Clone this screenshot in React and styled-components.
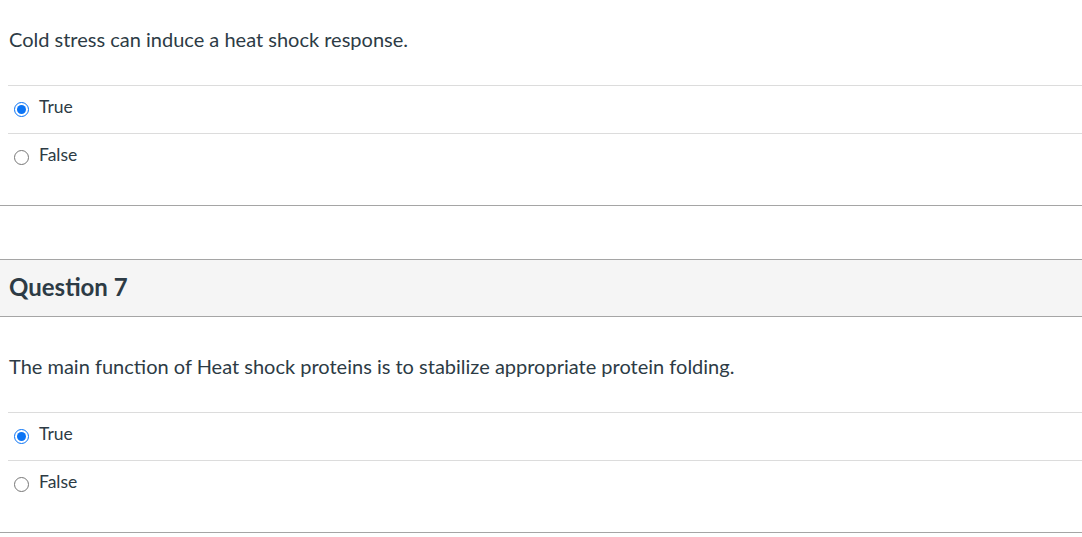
import styled, { createGlobalStyle } from 'styled-components'

const GlobalStyle = createGlobalStyle`
  body {
    margin: 0;
    background: #fff;
    font-family: Lato, "Liberation Sans", sans-serif;
    color: #2d3b45;
  }
`

const Page = styled.div`
  width: 1082px;
  padding-top: 26px;
`

const Question = styled.section`
  border-bottom: 1px solid #a5a5a5;
  padding-bottom: 24px;
  margin-bottom: ${p => (p.$last ? '0' : '53px')};
`

const Header = styled.div`
  display: flex;
  align-items: center;
  height: 56px;
  padding: 0 9px;
  background: #f5f5f5;
  border-top: 1px solid #a5a5a5;
  border-bottom: 1px solid #a5a5a5;
  margin-bottom: 36px;
`

const Title = styled.h2`
  margin: 0;
  font-size: 24px;
  font-weight: 700;
  line-height: 1.2;
  position: relative;
  top: -1px;
`

const Text = styled.p`
  margin: 0 0 32px;
  padding: 0 9px;
  font-size: 20px;
  line-height: 27px;
`

const Answers = styled.div`
  margin-left: 8px;
`

const Answer = styled.label`
  display: flex;
  align-items: center;
  gap: 10px;
  padding: 9px 0 14px 6px;
  border-top: 1px solid #dcdcdc;
  font-size: 17.5px;
  line-height: 24px;
`

const Radio = styled.input`
  width: 15px;
  height: 15px;
  margin: 5px 0 0 0;
  accent-color: #0b74f5;
`

const questions = [
  { title: null, text: 'Cold stress can induce a heat shock response.', answer: 'True' },
  { title: 'Question 7', text: 'The main function of Heat shock proteins is to stabilize appropriate protein folding.', answer: 'True' },
]

const App = () => {
  return (
    <Page>
      <GlobalStyle />
      {questions.map((q, i) => (
        <Question key={i} $last={i === questions.length - 1}>
          {q.title && (
            <Header>
              <Title>{q.title}</Title>
            </Header>
          )}
          <Text>{q.text}</Text>
          <Answers>
            {['True', 'False'].map(a => (
              <Answer key={a}>
                <Radio type="radio" name={'q' + i} defaultChecked={a === q.answer} />
                {a}
              </Answer>
            ))}
          </Answers>
        </Question>
      ))}
    </Page>
  )
}
export default App
